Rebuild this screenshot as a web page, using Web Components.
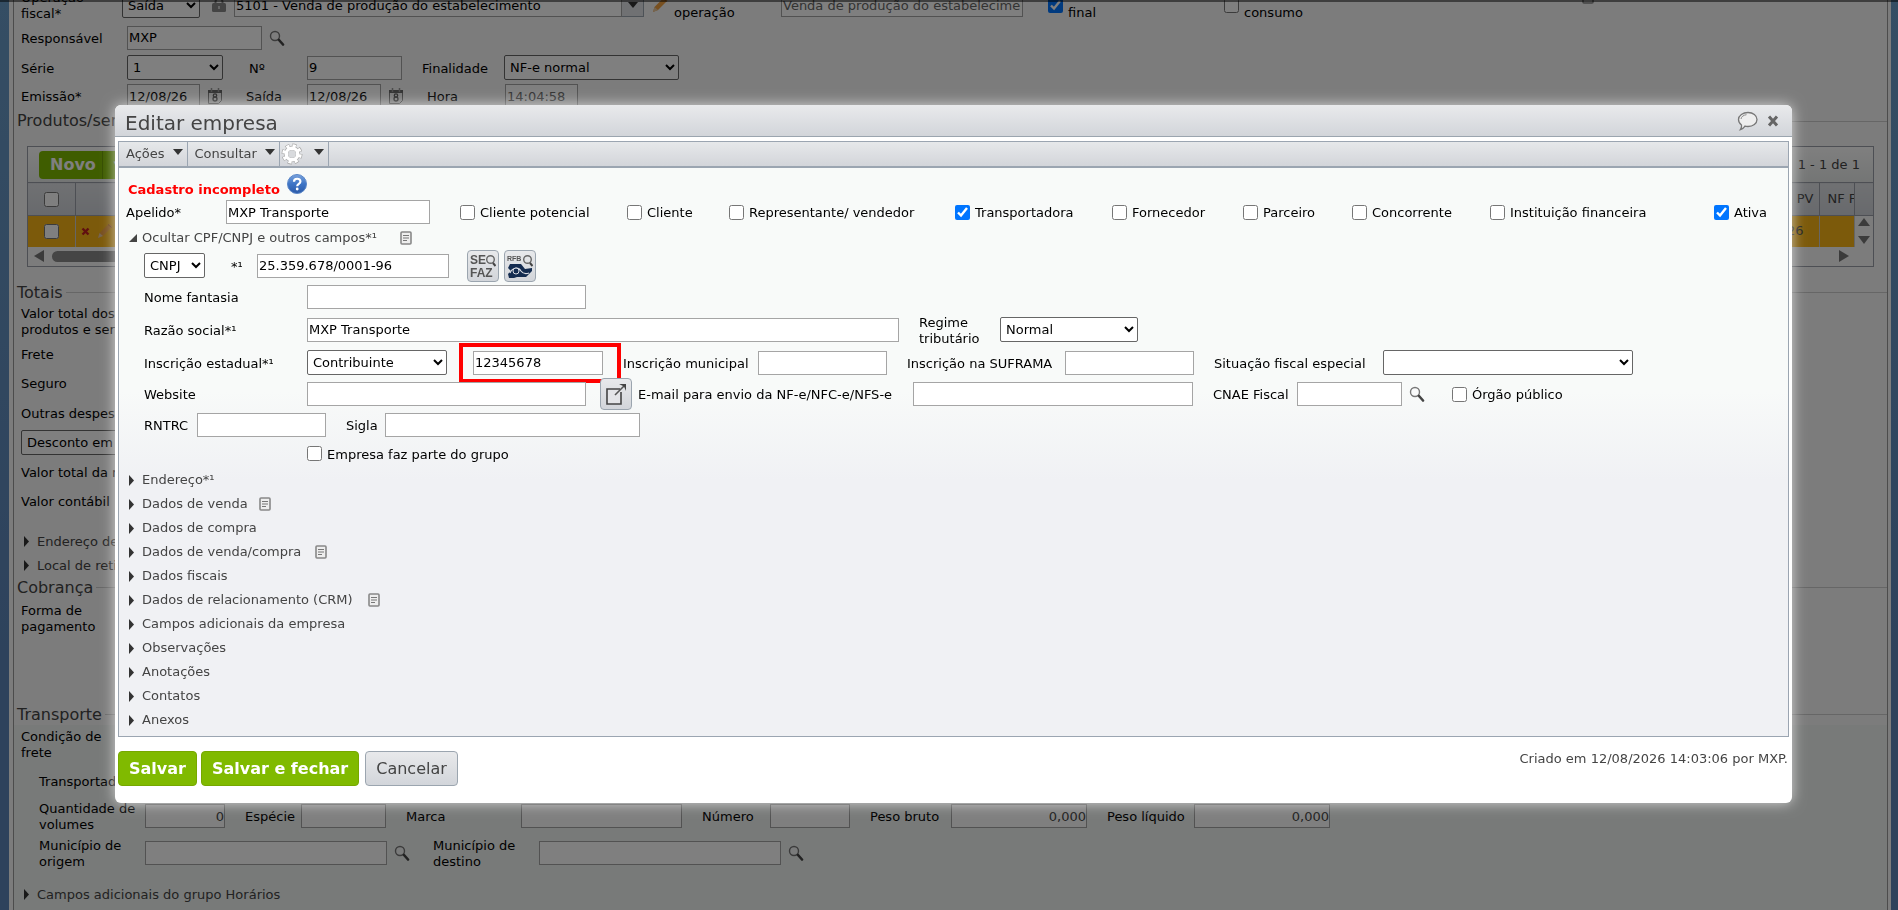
<!DOCTYPE html>
<html lang="pt-BR">
<head>
<meta charset="utf-8">
<title>Editar empresa</title>
<style>
  html, body {
    height: 100%;
    margin: 0;
    overflow: hidden;
  }
  body {
    font: 13px/16px "DejaVu Sans", Verdana, sans-serif;
    color: #000;
    background: linear-gradient(#6a9cc8, #5c84b8 680px);
  }
</style>
</head>
<body>
<erp-invoice></erp-invoice>
<erp-dialog heading="Editar empresa">
  <erp-company></erp-company>
</erp-dialog>

<script>
const ICONS = {
  search: [16, 16, `<circle cx="6" cy="6" r="4.500" fill="#fff" fill-opacity=".3" stroke="#777" stroke-width="1.400"/><path d="M10 10l4 4.500" stroke="#444" stroke-width="2.600" stroke-linecap="round"/>`],
  lock: [16, 16, `<path d="M4.500 7V5a3.500 3.500 0 0 1 7 0v2" fill="none" stroke="#888" stroke-width="2"/><rect x="1" y="6" width="14" height="9" rx="1.500" fill="#888"/><path d="M8 9v3" stroke="#ccc" stroke-width="2"/>`],
  pencil: [18, 18, `<path d="M2 16l1.500-5L13 1.500l3.500 3L7 14z" fill="#f0a040"/><path d="M2 16l1.500-5L7 14z" fill="#e8c8a0"/><path d="M12 2.500l3.500 3" stroke="#c87830"/>`],
  calendar: [16, 16, `<path d="M1.500 2.500h13v10l-3 3h-10z" fill="#eee" stroke="#777"/><path d="M1 3.500h14" stroke="#666" stroke-width="3"/><path d="M4.500 0v4M11.500 0v4" stroke="#999" stroke-width="1.500"/><g fill="none" stroke="#555" stroke-width="1.300"><circle cx="8" cy="7.500" r="1.700"/><circle cx="8" cy="11" r="2"/></g>`],
  note: [12, 14, `<rect x="1" y="1" width="10" height="12" rx="1" fill="#eee" stroke="#888" stroke-width="1.600"/><path d="M3 4.500h6M3 7h6M3 9.500h4" stroke="#777" stroke-width="1.200"/>`],
  bubble: [22, 20, `<path d="M11 1.500c5 0 9 3 9 7s-4 7-9 7c-1 0-2 0-3-.4-1 1.600-2 2.700-4.500 3.400 1-1.300 1.300-2.500 1-4.400C2.800 12.800 1.500 11 1.500 8.500c0-4 4.500-7 9.500-7z" fill="#eee" stroke="#777" stroke-width="1.300"/><path d="M4 8c.3-2.300 2.500-4 5.500-4.300" fill="none" stroke="#888"/>`],
  close: [12, 12, `<path d="M2 1.500l8 9M10 1.500l-8 9" stroke="#666" stroke-width="3"/>`],
  gear: [22, 22, `<circle cx="11" cy="11" r="8" fill="none" stroke="#aaa" stroke-width="5" stroke-dasharray="3.800 2.483"/><circle cx="11" cy="11" r="5.800" fill="none" stroke="#aaa" stroke-width="5"/><circle cx="11" cy="11" r="8" fill="none" stroke="#fff" stroke-width="3.500" stroke-dasharray="3 3.283" stroke-dashoffset="-.4"/><circle cx="11" cy="11" r="5.800" fill="none" stroke="#fff" stroke-width="3.400"/><circle cx="11" cy="11" r="3.800" fill="#d8dadd"/>`],
  help: [20, 20, `<defs><linearGradient id="h" x1="0" y1="0" x2="0" y2="1"><stop offset="0" stop-color="#7ba3dc"/><stop offset=".5" stop-color="#3d74c6"/><stop offset="1" stop-color="#2c5aa8"/></linearGradient></defs><circle cx="10" cy="10" r="9.500" fill="url(#h)" stroke="#5a86c8"/><path d="M7 7.800c0-4 6.400-4 6.400-.3 0 2.300-3.200 2.300-3.200 4.700" fill="none" stroke="#fff" stroke-width="2.200"/><circle cx="10.200" cy="15" r="1.400" fill="#fff"/>`],
  external: [26, 26, `<path d="M17 8H4v15h14V11" fill="#e4e5e8" stroke="#444" stroke-width="1.600"/><path d="M12 14L21 5" stroke="#555" stroke-width="1.600"/><path d="M16 3h7v7l-2-4.500z" fill="#444"/>`],
  sefaz: [26, 26, `<g font-family="Liberation Sans Narrow, Liberation Sans, sans-serif" font-weight="bold" font-size="12" fill="#555"><text x="0" y="11">SE</text><text x="0" y="24">FAZ</text></g><circle cx="20.500" cy="6.500" r="3.800" fill="none" stroke="#666" stroke-width="1.400"/><path d="M23 10l2.500 3" stroke="#444" stroke-width="2"/>`],
  rfb: [26, 26, `<text x="0" y="8" font-family="Liberation Sans Narrow, Liberation Sans, sans-serif" font-weight="bold" font-size="7" fill="#555">RFB</text><circle cx="20.500" cy="6.500" r="3.800" fill="none" stroke="#666" stroke-width="1.400"/><path d="M23 10l2.500 3" stroke="#444" stroke-width="2"/><path d="M3 11h11l4 5 7-1v3l-6 6h-9l-3 1H2l-1-4 3-3-3-3z" fill="#142c50"/><path d="M3 20c2-5 8-7 11-2 2 3 5 3 8 2" fill="none" stroke="#d8dbe2" stroke-width="1.200"/><circle cx="9" cy="18" r="3" fill="#142c50" stroke="#d8dbe2"/>`],
  cross: [9, 9, `<path d="M1.500 1.500l6 6M7.500 1.500l-6 6" stroke="#c02020" stroke-width="2.400"/>`],
  right: [5, 11, `<path d="M0 0l5 5.500L0 11z" fill="#333"/>`],
  corner: [8, 8, `<path d="M8 0v8H0z" fill="#444"/>`],
  down: [10, 6, `<path d="M0 0h10L5 6z" fill="#333"/>`],
  arrowUp: [12, 8, `<path d="M6 0l6 8H0z" fill="#777"/>`],
  arrowDown: [12, 8, `<path d="M0 0h12L6 8z" fill="#777"/>`],
  arrowLeft: [10, 12, `<path d="M10 0v12L0 6z" fill="#777"/>`],
  arrowRight: [10, 12, `<path d="M0 0l10 6-10 6z" fill="#777"/>`],
}

const icon = (name) => {
  const [w, h, body] = ICONS[name]
  return `<svg width="${w}" height="${h}" viewBox="0 0 ${w} ${h}" aria-hidden="true">${body}</svg>`
}

const BASE = `
  *{ box-sizing: border-box; }
  svg{ display: block; flex: none; }
  button{ font: inherit; color: inherit; padding: 0; margin: 0; cursor: pointer; }
`

// shared base: render html() once into an open shadow root
class ErpElement extends HTMLElement {
  connectedCallback() {
    if (this.shadowRoot) return
    const shadow = this.attachShadow({mode: "open"})
    shadow.innerHTML = `<style>${BASE}</style>${this.html()}`
  }
  attr(name, fallback = "") {
    return this.getAttribute(name) ?? fallback
  }
}

customElements.define("erp-icon", class extends ErpElement {
  html() {
    return `<style>:host{ display: inline-flex; align-items: center; flex: none; }</style>${icon(this.attr("name"))}`
  }
})

// label + text box / select, optional trailing icon
customElements.define("erp-field", class extends ErpElement {
  html() {
    const kind = this.attr("kind", "text")
    const width = this.attr("w", "130")
    const value = this.attr("value")
    const label = this.attr("label")
    const aria = label ? "" : ` aria-label="${this.attr("name")}"`
    const lock = this.hasAttribute("locked") ? " readonly" : ""
    const control = kind === "select"
      ? `<select id="c"${aria}><option>${value}</option></select>`
      : `<input id="c" type="text" value="${value}"${aria}${lock}>`
    return `
<style>
  :host{ display: flex; align-items: center; gap: 7px; flex: none; }
  label{ ${this.hasAttribute("lw") ? `width: ${this.attr("lw")}px;` : "white-space: nowrap;"} flex: none; padding-top: 2px; }
  :host([low]) label{ align-self: flex-end; }
  input, select{
    width: ${width}px;
    font: inherit;
    color: #000;
    background: #fff;
    margin: 0;
  }
  input{ height: 24px; border: 1px solid #a5a5a5; padding: 0 1px; }
  select{ height: 25px; border: 1px solid #666; border-radius: 2px; padding: 0 1px; }
  :host([end]) input{ text-align: right; padding: 0; color: #444; }
  :host([locked]) input{ color: #666; }
  .combo{ display: flex; }
  .combo button{
    width: 22px;
    border: 1px solid #9ba5af;
    border-left: 0;
    background: #e0e2e6;
    display: flex;
    justify-content: center;
    align-items: center;
  }
</style>
${label ? `<label for="c">${label}</label>` : ""}
${kind === "combo" ? `<div class="combo">${control}<button type="button" aria-label="Abrir lista">${icon("down")}</button></div>` : control}
${this.hasAttribute("icon") ? icon(this.attr("icon")) : ""}`
  }
})

customElements.define("erp-check", class extends ErpElement {
  html() {
    return `
<style>
  :host{ display: flex; align-items: center; flex: none; }
  input{ width: 15px; height: 15px; margin: 0 5px 0 0; flex: none; accent-color: #0075ff; }
  label{ white-space: nowrap; padding-top: 2px; min-width: ${this.attr("lw", "0")}px; }
  :host([low]) label{ align-self: flex-end; }
</style>
<input id="c" type="checkbox"${this.hasAttribute("checked") ? " checked" : ""}><label for="c">${this.attr("label")}</label>`
  }
})

customElements.define("erp-button", class extends ErpElement {
  html() {
    return `
<style>
  :host{ display: flex; flex: none; }
  button{
    height: 35px;
    padding: 0 10px;
    font-size: 16px;
    color: #444;
    white-space: nowrap;
    border: 1px solid #9ba5af;
    border-radius: 4px;
    background: linear-gradient(#e8e9eb, #d2d5da);
  }
  :host([primary]) button{
    font-weight: bold;
    color: #fff;
    border-color: #76a800;
    background: #80ba00;
  }
  :host([square]) button{ width: 32px; height: 32px; padding: 0; display: flex; align-items: center; justify-content: center; }
</style>
<button type="button"${this.hasAttribute("hint") ? ` aria-label="${this.attr("hint")}"` : ""}><slot></slot></button>`
  }
})

customElements.define("erp-collapser", class extends ErpElement {
  html() {
    const open = this.hasAttribute("open")
    return `
<style>
  :host{ display: flex; height: 24px; flex: none; }
  button{ display: flex; align-items: center; background: none; border: 0; color: #444; white-space: nowrap; }
  .mark{ width: 13px; display: flex; }
  .text{ min-width: ${this.attr("tw", "0")}px; text-align: left; }
  .note{ margin-left: 10px; }
</style>
<button type="button" aria-expanded="${open}">
  <span class="mark">${icon(open ? "corner" : "right")}</span>
  <span class="text">${this.attr("label")}</span>
  ${this.hasAttribute("note") ? `<span class="note">${icon("note")}</span>` : ""}
</button>`
  }
})

customElements.define("erp-legend", class extends ErpElement {
  html() {
    return `
<style>
  :host{ display: flex; align-items: center; gap: 3px; height: 20px; margin-left: 3px; font-size: 16px; line-height: 20px; color: #444; }
  :host::after{ content: ""; flex: 1; border-top: 1px solid #ccc; }
</style>
<span><slot></slot></span>`
  }
})

customElements.define("erp-grid", class extends ErpElement {
  html() {
    return `
<style>
  :host{ display: block; margin: 15px 13px 16px; border: 1px solid #9a9ea8; background: #f8f8f8; }
  .bar{ height: 35px; display: flex; align-items: center; padding: 0 13px 0 11px; color: #444; background: linear-gradient(#fff, #e8ebea); }
  .bar span{ margin-left: auto; }
  .new{ display: flex; height: 28px; }
  .new button{ border: 0; background: #7fba00; color: #fff; font-weight: bold; font-size: 16px; padding: 0 6px 0 11px; border-radius: 4px 0 0 4px; }
  .new button + button{ border-left: 1px solid #6a9c00; border-radius: 0 4px 4px 0; font-size: 10px; }
  table{ width: 100%; table-layout: fixed; border-collapse: collapse; }
  th{ height: 33px; font-weight: normal; color: #444; border: 1px solid #9a9ea8; border-left: 0; background: linear-gradient(#e0e2e6, #d0d3d9); }
  th, td{ padding: 0; overflow: hidden; white-space: nowrap; }
  td{ height: 31px; background: #f8b416; border-right: 1px solid #ccc; color: #444; }
  tr > :first-child{ text-align: center; }
  .num{ text-align: right; padding-right: 5px; }
  td.num{ padding-right: 15px; }
  .cut{ text-align: left; padding-left: 8px; }
  .end{ border-right: 0; }
  td.end{ background: #f8f8f8; }
  input{ width: 15px; height: 15px; margin: 0; vertical-align: middle; }
  .pair{ display: flex; align-items: center; gap: 6px; padding-left: 5px; }
  .spin{ display: flex; flex-direction: column; gap: 10px; align-items: center; }
  .scroll{ height: 19px; display: flex; align-items: center; gap: 8px; padding: 0 24px 0 6px; }
  .thumb{ width: 60%; height: 11px; border-radius: 6px; background: #8a8a8a; margin-right: auto; }
</style>
<div class="bar">
  <div class="new"><button type="button">Novo</button><button type="button" aria-label="Mais">▼</button></div>
  <span>1 - 1 de 1</span>
</div>
<table>
  <colgroup><col style="width:47px"><col><col style="width:80px"><col style="width:35px"><col style="width:19px"></colgroup>
  <tr><th><input type="checkbox" aria-label="Selecionar todos"></th><th></th><th class="num">PV</th><th class="cut">NF F</th><th class="end"></th></tr>
  <tr><td><input type="checkbox" aria-label="Selecionar item"></td><td><div class="pair">${icon("cross")}${icon("pencil")}</div></td><td class="num">26</td><td></td><td class="end"><div class="spin">${icon("arrowUp")}${icon("arrowDown")}</div></td></tr>
</table>
<div class="scroll">${icon("arrowLeft")}<div class="thumb"></div>${icon("arrowRight")}</div>`
  }
})

customElements.define("erp-invoice", class extends ErpElement {
  html() {
    return `
<style>
  :host{ display: block; height: 100%; padding: 0 7px 0 9px; overflow: hidden; }
  .sheet{ height: 100%; padding: 0 3px 0 4px; background: #f8f8f8; }
  .panel{ height: 100%; border: solid #999; border-width: 0 1px; overflow: hidden; }
  .clip{ height: 21px; display: flex; align-items: flex-end; }
  .row{ display: flex; flex: none; padding-left: 7px; }
  .in{ padding-left: 25px; }
  .sub{ padding-left: 10px; }
  .transport{ background: #f0f4f2; height: 300px; }
</style>
<div class="sheet"><div class="panel">
  <div class="clip"><div class="row" style="height:32px">
    <erp-field label="Operação fiscal*" lw="94" kind="select" w="78" value="Saída" name="Tipo"></erp-field>
    <erp-icon name="lock" style="margin:0 7px 0 11px"></erp-icon>
    <erp-field kind="combo" w="388" value="5101 - Venda de produção do estabelecimento" name="Operação" style="width:410px"></erp-field>
    <erp-icon name="pencil" style="margin:0 5px 0 7px"></erp-icon>
    <erp-field low locked label="operação" lw="100" w="242" value="Venda de produção do estabelecimento"></erp-field>
    <erp-check low checked label="final" style="margin-left:25px"></erp-check>
    <erp-check low label="consumo" style="margin-left:128px"></erp-check>
    <erp-icon name="note" style="margin-left:279px;height:16px"></erp-icon>
  </div></div>
  <div class="row" style="height:33px"><erp-field label="Responsável" lw="99" w="135" value="MXP" icon="search"></erp-field></div>
  <div class="row" style="height:27px;gap:26px">
    <erp-field label="Série" lw="99" kind="select" w="96" value="1"></erp-field>
    <erp-field label="Nº" lw="51" w="95" value="9"></erp-field>
    <erp-field label="Finalidade" lw="75" kind="select" w="175" value="NF-e normal" style="margin-left:-6px"></erp-field>
  </div>
  <div class="row" style="height:30px;gap:23px">
    <erp-field label="Emissão*" lw="99" w="73" value="12/08/26" icon="calendar"></erp-field>
    <erp-field label="Saída" lw="54" w="74" value="12/08/26" icon="calendar"></erp-field>
    <erp-field locked label="Hora" lw="71" w="73" value="14:04:58"></erp-field>
  </div>
  <erp-legend>Produtos/serviços</erp-legend>
  <erp-grid></erp-grid>
  <erp-legend>Totais</erp-legend>
  <div class="row" style="height:37px"><erp-field label="Valor total dos produtos e serviços" lw="135"></erp-field></div>
  <div class="row" style="height:29px"><erp-field label="Frete" lw="135"></erp-field></div>
  <div class="row" style="height:29px"><erp-field label="Seguro" lw="135"></erp-field></div>
  <div class="row" style="height:30px"><erp-field label="Outras despesas" lw="135"></erp-field></div>
  <div class="row" style="height:29px"><erp-field kind="select" w="130" value="Desconto em" name="Desconto"></erp-field></div>
  <div class="row" style="height:30px"><erp-field label="Valor total da nota" lw="135"></erp-field></div>
  <div class="row" style="height:28px"><erp-field label="Valor contábil" lw="135"></erp-field></div>
  <div class="sub" style="padding-top:15px">
    <erp-collapser label="Endereço de entrega"></erp-collapser>
    <erp-collapser label="Local de retirada"></erp-collapser>
  </div>
  <erp-legend>Cobrança</erp-legend>
  <div class="row" style="height:41px"><erp-field label="Forma de pagamento" lw="99"></erp-field></div>
  <erp-legend style="margin-top:66px">Transporte</erp-legend>
  <div class="transport">
    <div class="row" style="height:39px"><erp-field label="Condição de frete" lw="99" kind="select"></erp-field></div>
    <div class="row in" style="height:34px"><erp-field label="Transportadora" lw="99"></erp-field></div>
    <div class="row in" style="height:37px;gap:20px">
      <erp-field end label="Quantidade de volumes" lw="99" w="80" value="0"></erp-field>
      <erp-field label="Espécie" lw="49" w="85"></erp-field>
      <erp-field label="Marca" lw="108" w="161"></erp-field>
      <erp-field label="Número" lw="61" w="80"></erp-field>
      <erp-field end label="Peso bruto" lw="74" w="136" value="0,000"></erp-field>
      <erp-field end label="Peso líquido" lw="80" w="136" value="0,000"></erp-field>
    </div>
    <div class="row in" style="height:36px;gap:23px">
      <erp-field label="Município de origem" lw="99" w="242" icon="search"></erp-field>
      <erp-field label="Município de destino" lw="99" w="242" icon="search"></erp-field>
    </div>
    <div class="sub" style="padding-top:12px"><erp-collapser label="Campos adicionais do grupo Horários"></erp-collapser></div>
  </div>
</div></div>`
  }
})

customElements.define("erp-company", class extends ErpElement {
  html() {
    return `
<style>
  :host{ display: block; border: 1px solid #9ba5b1; background: linear-gradient(#f8faf9, #f8faf9 42%, #f0f1f4 57%); }
  nav{ display: flex; height: 26px; border-bottom: 2px solid #9ba5b1; background: linear-gradient(#e6e8ea, #d3d5da); }
  nav button{ display: flex; gap: 8px; align-items: center; border: 0; border-right: 1px solid #9ba5b1; background: none; padding: 0 4px 0 7px; color: #444; }
  nav .gear{ padding-left: 1px; gap: 11px; }
  nav svg:last-child{ margin-bottom: 5px; }
  .body{ padding: 0 7px 4px; }
  .row{ display: flex; flex: none; }
  .in{ padding-left: 18px; gap: 20px; }
  .warn{ padding: 6px 2px 0; height: 30px; align-items: baseline; gap: 7px; font-weight: bold; color: #f00; }
  .warn button{ border: 0; background: none; }
  .types{ gap: 36px; }
  .tools{ display: flex; gap: 5px; align-items: center; margin-left: -2px; }
  .mark{
    align-self: center;
    margin: -4px 0 -4px -8px;
    padding: 4px 14px 4px 10px;
    border: 4px solid #f00;
  }
</style>
<nav>
  <button type="button">Ações ${icon("down")}</button>
  <button type="button">Consultar ${icon("down")}</button>
  <button type="button" class="gear" aria-label="Configurações">${icon("gear")}${icon("down")}</button>
</nav>
<div class="body">
  <div class="row warn"><span>Cadastro incompleto</span><button type="button" aria-label="Ajuda">${icon("help")}</button></div>
  <div class="row types" style="height:28px">
    <erp-field label="Apelido*" lw="93" w="204" value="MXP Transporte" style="margin-right:-6px"></erp-field>
    <erp-check lw="111" label="Cliente potencial"></erp-check>
    <erp-check lw="46" label="Cliente"></erp-check>
    <erp-check lw="170" label="Representante/ vendedor"></erp-check>
    <erp-check lw="101" checked label="Transportadora"></erp-check>
    <erp-check lw="75" label="Fornecedor"></erp-check>
    <erp-check lw="53" label="Parceiro"></erp-check>
    <erp-check lw="82" label="Concorrente"></erp-check>
    <erp-check lw="140" label="Instituição financeira"></erp-check>
    <erp-check checked label="Ativa" style="margin-left:28px"></erp-check>
  </div>
  <erp-collapser open note tw="248" label="Ocultar CPF/CNPJ e outros campos*¹" style="padding-left:3px"></erp-collapser>
  <div class="row in" style="height:31px">
    <erp-field kind="select" w="61" value="CNPJ" name="Tipo de documento"></erp-field>
    <erp-field label="*¹" lw="19" w="192" value="25.359.678/0001-96" style="margin-left:6px"></erp-field>
    <div class="tools">
      <erp-button square hint="Consultar SEFAZ">${icon("sefaz")}</erp-button>
      <erp-button square hint="Consultar RFB">${icon("rfb")}</erp-button>
    </div>
  </div>
  <div class="row in" style="height:31px"><erp-field label="Nome fantasia" lw="156" w="279"></erp-field></div>
  <div class="row in" style="height:35px">
    <erp-field label="Razão social*¹" lw="156" w="592" value="MXP Transporte"></erp-field>
    <erp-field label="Regime tributário" lw="74" kind="select" w="138" value="Normal"></erp-field>
  </div>
  <div class="row in" style="height:31px">
    <erp-field label="Inscrição estadual*¹" lw="156" kind="select" w="140" value="Contribuinte"></erp-field>
    <div class="mark"><erp-field w="130" value="12345678" name="Inscrição estadual"></erp-field></div>
    <erp-field label="Inscrição municipal" lw="128" w="129" style="margin-left:-18px"></erp-field>
    <erp-field label="Inscrição na SUFRAMA" lw="151" w="129"></erp-field>
    <erp-field label="Situação fiscal especial" lw="162" kind="select" w="250"></erp-field>
  </div>
  <div class="row in" style="height:32px">
    <erp-field label="Website" lw="156" w="279"></erp-field>
    <div class="row" style="gap:6px;margin-left:-6px">
      <erp-button square hint="Abrir website" style="align-items:center">${icon("external")}</erp-button>
      <erp-field label="E-mail para envio da NF-e/NFC-e/NFS-e" lw="268" w="280"></erp-field>
    </div>
    <erp-field label="CNAE Fiscal" lw="77" w="105" icon="search"></erp-field>
    <erp-check label="Órgão público" style="margin-left:7px"></erp-check>
  </div>
  <div class="row in" style="height:29px">
    <erp-field label="RNTRC" lw="46" w="129"></erp-field>
    <erp-field label="Sigla" lw="32" w="255"></erp-field>
  </div>
  <div class="row" style="height:29px;padding-left:181px"><erp-check label="Empresa faz parte do grupo"></erp-check></div>
  <div style="padding-left:3px">
    <erp-collapser label="Endereço*¹"></erp-collapser>
    <erp-collapser note tw="107" label="Dados de venda"></erp-collapser>
    <erp-collapser label="Dados de compra"></erp-collapser>
    <erp-collapser note tw="163" label="Dados de venda/compra"></erp-collapser>
    <erp-collapser label="Dados fiscais"></erp-collapser>
    <erp-collapser note tw="216" label="Dados de relacionamento (CRM)"></erp-collapser>
    <erp-collapser label="Campos adicionais da empresa"></erp-collapser>
    <erp-collapser label="Observações"></erp-collapser>
    <erp-collapser label="Anotações"></erp-collapser>
    <erp-collapser label="Contatos"></erp-collapser>
    <erp-collapser label="Anexos"></erp-collapser>
  </div>
</div>`
  }
})

customElements.define("erp-dialog", class extends ErpElement {
  html() {
    return `
<style>
  :host{
    position: fixed;
    inset: 0;
    padding: 103px 106px 0 115px;
    border-top: 2px solid rgba(0, 0, 0, .5);
    background: rgba(0, 0, 0, .5);
  }
  .box{ background: #fff; border-radius: 6px; overflow: hidden; box-shadow: 0 0 14px rgba(255, 255, 255, .7); }
  header{
    display: flex;
    align-items: center;
    height: 32px;
    padding: 0 13px 0 10px;
    color: #444;
    background: linear-gradient(#e9eaec, #d2d5da);
    border-bottom: 1px solid #9ba5af;
  }
  h1{ margin: 0 auto 0 0; padding-top: 4px; font-weight: normal; font-size: 20px; line-height: 24px; }
  header button{ border: 0; background: none; margin-left: 8px; }
  .content{ padding: 4px 3px 0; }
  footer{ display: flex; gap: 4px; padding: 14px 4px 17px 3px; align-items: flex-start; }
  footer span{ margin-left: auto; color: #444; }
  footer erp-button:nth-of-type(3){ margin-left: 2px; }
</style>
<div class="box" role="dialog" aria-labelledby="t">
  <header>
    <h1 id="t">${this.attr("heading")}</h1>
    <button type="button" aria-label="Comentários">${icon("bubble")}</button>
    <button type="button" aria-label="Fechar">${icon("close")}</button>
  </header>
  <div class="content"><slot></slot></div>
  <footer>
    <erp-button primary>Salvar</erp-button>
    <erp-button primary>Salvar e fechar</erp-button>
    <erp-button>Cancelar</erp-button>
    <span>Criado em 12/08/2026 14:03:06 por MXP.</span>
  </footer>
</div>`
  }
})
</script>
</body>
</html>
